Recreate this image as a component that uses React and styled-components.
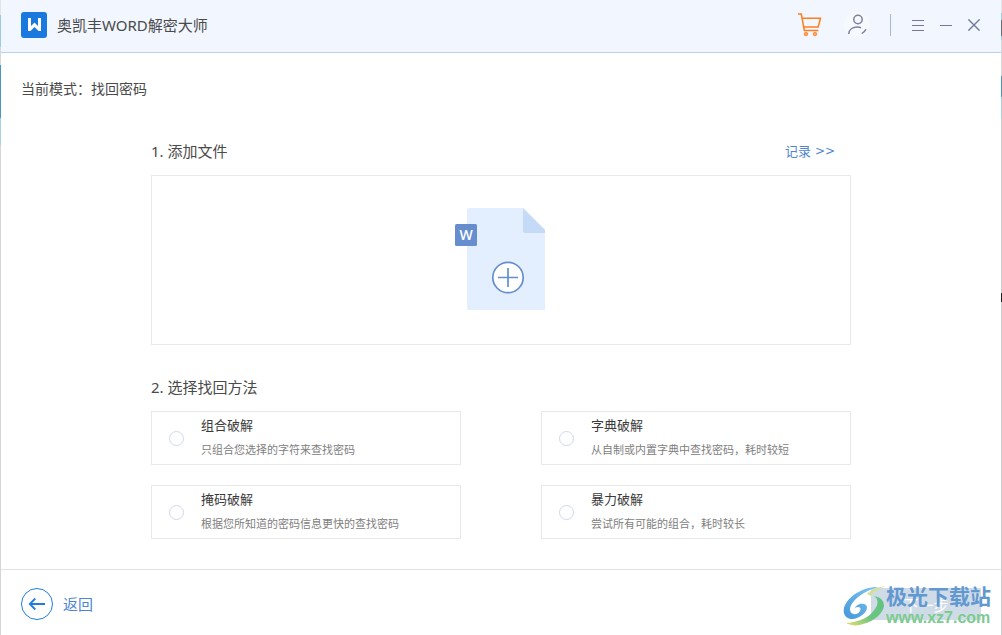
import React from 'react';
import styled, { createGlobalStyle } from 'styled-components';

const GlobalStyle = createGlobalStyle`
  *, *::before, *::after { box-sizing: border-box; }
  body {
    margin: 0;
    font-family: "Noto Sans", "Noto Sans CJK SC", sans-serif;
    color: #4a4a4a;
  }
  button, input { font: inherit; }
  button {
    margin: 0;
    padding: 0;
    border: 0;
    background: none;
    color: inherit;
    cursor: pointer;
  }
  h1, h2, p { margin: 0; font-weight: 400; }
  svg { display: block; flex: none; }
`;

const Desktop = styled.div`
  min-height: 100vh;
  padding: 0 1px;
  display: flex;
  background:
    linear-gradient(#e4e4e6 15px, #9ccbdc 15px 47px, #d8d8da 47px 65px, #4a98bd 65px 118px, #a9d2e0 118px 145px, #d6d6d6 145px) left / 1px 100% no-repeat,
    linear-gradient(#e4e4e6 13px, #9ccbdc 13px 20px, #6d6d70 20px 36px, #9ccbdc 36px 40px, #d8d8da 40px 76px, #4a98bd 76px 97px, #a9d2e0 97px 119px, #cecece 119px 293px, #222 293px 302px, #cecece 302px) right / 1px 100% no-repeat,
    #fff;
`;

const Window = styled.div`
  flex: 1;
  min-width: 0;
  display: flex;
  flex-direction: column;
  background: #fff;
`;

const TitleBar = styled.header`
  display: flex;
  align-items: center;
  justify-content: space-between;
  height: 53px;
  padding: 0 21px 2px 20px;
  background: #f1f6ff;
  border-bottom: 1px solid #bdd0ea;
`;

const Brand = styled.div`
  display: flex;
  align-items: center;
  gap: 10px;
`;

const AppName = styled.h1`
  font-size: 15px;
  line-height: 20px;
`;

const Tools = styled.div`
  display: flex;
  align-items: center;
  gap: 20px;
`;

const WindowControls = styled.div`
  display: flex;
  gap: 16px;
  padding-left: 1px;
`;

const IconButton = styled.button`
  display: block;
  color: #73799a;
`;

const Divider = styled.span`
  width: 1px;
  height: 22px;
  background: #a9b6d6;
`;

const Main = styled.main`
  flex: 1;
  padding: 26px 20px 30px;
`;

const Mode = styled.p`
  font-size: 14px;
  line-height: 20px;
`;

const Steps = styled.div`
  display: flex;
  flex-direction: column;
  gap: 32px;
  max-width: 700px;
  margin: 42px auto 0;
`;

const Step = styled.section`
  display: flex;
  flex-direction: column;
  gap: 14px;
`;

const StepHead = styled.div`
  display: flex;
  align-items: center;
  justify-content: space-between;
  padding-right: 16px;
`;

const StepTitle = styled.h2`
  font-size: 15px;
  line-height: 20px;
`;

const RecordLink = styled.a`
  display: flex;
  align-items: center;
  gap: 4px;
  font-size: 13px;
  line-height: 20px;
  color: #4f86d2;
  text-decoration: none;
`;

const Arrows = styled.span`
  font-family: "DejaVu Sans", sans-serif;
  font-size: 12px;
`;

const DropZone = styled.button`
  display: flex;
  align-items: center;
  justify-content: center;
  width: 100%;
  height: 170px;
  padding: 0 2px 2px 0;
  border: 1px solid #e9e9e9;
`;

const Methods = styled.div`
  display: grid;
  grid-template-columns: 1fr 1fr;
  gap: 20px 80px;
`;

const MethodCard = styled.label`
  display: flex;
  align-items: center;
  gap: 17px;
  height: 54px;
  padding: 0 17px;
  border: 1px solid #e9e9e9;
  cursor: pointer;
`;

const Radio = styled.input`
  appearance: none;
  flex: none;
  width: 15px;
  height: 15px;
  margin: 0;
  border: 1px solid #cfd8ee;
  border-radius: 50%;
  &:checked { border: 4px solid #4f86d2; }
`;

const MethodText = styled.span`
  display: flex;
  flex-direction: column;
  gap: 9px;
  padding-bottom: 2px;
  line-height: 16px;
`;

const MethodName = styled.span`
  font-size: 13px;
  color: #3a3a3a;
`;

const MethodNote = styled.span`
  font-size: 11px;
  color: #808080;
`;

const Footer = styled.footer`
  position: relative;
  display: flex;
  align-items: center;
  justify-content: space-between;
  height: 66px;
  padding: 3px 20px 0;
  border-top: 1px solid #e1e1e1;
`;

const BackButton = styled.button`
  display: flex;
  align-items: center;
  gap: 10px;
  font-size: 15px;
  line-height: 20px;
  color: #4f86d2;
`;

const NextButton = styled.button`
  width: 110px;
  height: 32px;
  background: #d0dbe8;
  color: #fff;
  font-size: 15px;
`;

const Watermark = styled.div`
  position: absolute;
  right: 10px;
  bottom: 6px;
  display: flex;
  align-items: center;
  pointer-events: none;
`;

const WatermarkText = styled.div`
  display: flex;
  flex-direction: column;
  white-space: nowrap;
  font-weight: 700;
`;

const SiteName = styled.span`
  font-family: "Noto Sans CJK SC", sans-serif;
  font-size: 21px;
  line-height: 24px;
  color: #6198d0;
`;

const SiteUrl = styled.span`
  font-family: "Liberation Sans", Arial, sans-serif;
  font-size: 16px;
  line-height: 22px;
  color: #7ccb8f;
`;

const METHODS = [
  { id: 'combo', name: '组合破解', note: '只组合您选择的字符来查找密码' },
  { id: 'dictionary', name: '字典破解', note: '从自制或内置字典中查找密码，耗时较短' },
  { id: 'mask', name: '掩码破解', note: '根据您所知道的密码信息更快的查找密码' },
  { id: 'brute', name: '暴力破解', note: '尝试所有可能的组合，耗时较长' },
];

const LogoIcon = () => (
  <svg width="26" height="26" viewBox="0 0 26 26" aria-hidden="true">
    <rect width="26" height="26" rx="3" fill="#1a79df" />
    <path d="M7 6h3v8l3.500-3.500L17 14V6h3v13h-2.500l-4-4-4 4H7z" fill="#fff" />
  </svg>
);

const CartIcon = () => (
  <svg width="26" height="24" viewBox="0 0 26 24" fill="none" stroke="#ff7f1f" strokeWidth="1.500" aria-hidden="true">
    <path d="M0 1h3.300l3 16.500h14M4.200 5.200H22.500l-2.300 8.800H5.700" />
    <circle cx="8" cy="21" r="1.800" fill="#ffa45e" strokeWidth="0.800" />
    <circle cx="17" cy="21" r="1.800" fill="#ffa45e" strokeWidth="0.800" />
  </svg>
);

const UserIcon = () => (
  <svg width="26" height="26" viewBox="0 0 26 26" fill="none" aria-hidden="true">
    <circle cx="13" cy="13" r="13" fill="#f6faff" />
    <g stroke="#7c81a0" strokeWidth="1.500">
      <circle cx="14" cy="7.500" r="4.200" />
      <path d="M4.700 22C5 17.500 8.700 15 13.200 15c1.600 0 2.700.2 3.800.7M17.700 21.700c1.800-.9 3.300-2.400 4.200-4.400" />
    </g>
  </svg>
);

const MenuIcon = () => (
  <svg width="12" height="12" viewBox="0 0 12 12" stroke="currentColor" aria-hidden="true">
    <path d="M0 1.500h12M0 6.500h12M0 11.500h12" />
  </svg>
);

const MinimizeIcon = () => (
  <svg width="12" height="12" viewBox="0 0 12 12" stroke="currentColor" aria-hidden="true">
    <path d="M0 6.500h12" />
  </svg>
);

const CloseIcon = () => (
  <svg width="12" height="12" viewBox="0 0 12 12" stroke="currentColor" strokeWidth="1.400" aria-hidden="true">
    <path d="M.4.4l11.200 11.200M11.600.4L.4 11.600" />
  </svg>
);

const AddDocumentIcon = () => (
  <svg width="90" height="102" viewBox="0 0 90 102" aria-hidden="true">
    <path d="M14 0h54l22 22v80H14a2 2 0 0 1-2-2V2a2 2 0 0 1 2-2z" fill="#e3effe" />
    <path d="M68 0l22 22v3H70a2 2 0 0 1-2-2z" fill="#c5daf6" />
    <rect y="16" width="22" height="22" rx="1.500" fill="#668ecf" />
    <text x="11" y="32" textAnchor="middle" fontFamily="Open Sans, sans-serif" fontSize="14" fontWeight="600" fill="#fff">W</text>
    <circle cx="53" cy="69.500" r="15.200" fill="#fff" stroke="#668ecf" strokeWidth="1.700" />
    <path d="M43 69.500h20M53 60v19" stroke="#668ecf" strokeWidth="1.700" />
  </svg>
);

const BackIcon = () => (
  <svg width="32" height="32" viewBox="0 0 32 32" fill="none" stroke="#1f7de0" aria-hidden="true">
    <circle cx="16" cy="16" r="15.500" />
    <path d="M24 16H9M14.300 10.500L8.800 16l5.500 5.500" strokeWidth="1.800" />
  </svg>
);

const WatermarkLogo = () => (
  <svg width="43" height="42" viewBox="0 0 43 42" aria-hidden="true">
    <defs>
      <linearGradient id="swooshBlue" x1="0" y1="1" x2="1" y2="0">
        <stop offset="0" stopColor="#4597dc" />
        <stop offset="1" stopColor="#82c7f0" />
      </linearGradient>
      <linearGradient id="swooshGreen" x1="0" y1="1" x2="1" y2="0">
        <stop offset="0" stopColor="#e8e070" />
        <stop offset="0.450" stopColor="#6cc580" />
        <stop offset="1" stopColor="#60c283" />
      </linearGradient>
    </defs>
    <path d="M36 2C20 1 4 12 1 23c-2 9 6 13 13 10 8-3 12-10 9-13-4-3-10 0-11 3 3-2 7-1 5 3-3 5-10 4-10-2C8 16 20 6 36 2z" fill="url(#swooshBlue)" />
    <path d="M24 9C29 4 35 2 43 1 37 3 31 7 28 11z" fill="#cfe0a0" />
    <path d="M31 11c4 2 5 8 1 13C27 32 17 37 3 38c5 3 12 3 17 1 12-3 20-11 21-18 0-6-4-9-10-10z" fill="url(#swooshGreen)" />
  </svg>
);

export default function App() {
  return (
    <>
      <GlobalStyle />
      <Desktop>
        <Window>
          <TitleBar>
            <Brand>
              <LogoIcon />
              <AppName>奥凯丰WORD解密大师</AppName>
            </Brand>
            <Tools>
              <IconButton type="button" aria-label="购买"><CartIcon /></IconButton>
              <IconButton type="button" aria-label="用户"><UserIcon /></IconButton>
              <Divider />
              <WindowControls>
                <IconButton type="button" aria-label="菜单"><MenuIcon /></IconButton>
                <IconButton type="button" aria-label="最小化"><MinimizeIcon /></IconButton>
                <IconButton type="button" aria-label="关闭"><CloseIcon /></IconButton>
              </WindowControls>
            </Tools>
          </TitleBar>

          <Main>
            <Mode>当前模式：找回密码</Mode>
            <Steps>
              <Step>
                <StepHead>
                  <StepTitle>1. 添加文件</StepTitle>
                  <RecordLink href="#records">记录 <Arrows>&gt;&gt;</Arrows></RecordLink>
                </StepHead>
                <DropZone type="button" aria-label="添加文件"><AddDocumentIcon /></DropZone>
              </Step>
              <Step>
                <StepTitle>2. 选择找回方法</StepTitle>
                <Methods role="radiogroup" aria-label="选择找回方法">
                  {METHODS.map(({ id, name, note }) => (
                    <MethodCard key={id}>
                      <Radio type="radio" name="method" value={id} />
                      <MethodText>
                        <MethodName>{name}</MethodName>
                        <MethodNote>{note}</MethodNote>
                      </MethodText>
                    </MethodCard>
                  ))}
                </Methods>
              </Step>
            </Steps>
          </Main>

          <Footer>
            <BackButton type="button"><BackIcon />返回</BackButton>
            <NextButton type="button">下一步</NextButton>
            <Watermark>
              <WatermarkLogo />
              <WatermarkText>
                <SiteName>极光下载站</SiteName>
                <SiteUrl>www.xz7.com</SiteUrl>
              </WatermarkText>
            </Watermark>
          </Footer>
        </Window>
      </Desktop>
    </>
  );
}
